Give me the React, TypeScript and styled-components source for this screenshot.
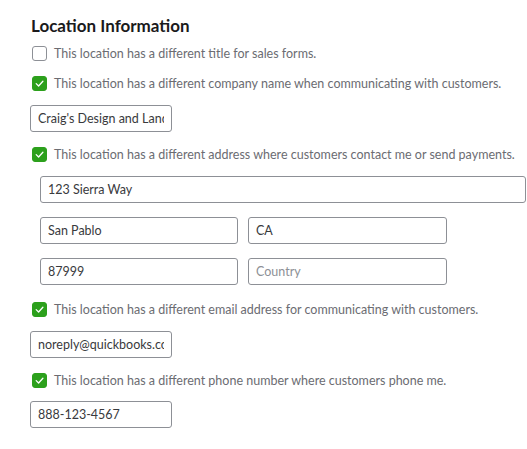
import React from "react";
import styled, { createGlobalStyle } from "styled-components";

const GlobalStyle = createGlobalStyle`
  html, body {
    margin: 0;
    padding: 0;
    background: #ffffff;
  }
  body {
    font-family: Lato, "Open Sans", Arial, sans-serif;
    -webkit-font-smoothing: antialiased;
  }
`;

const Section = styled.section`
  display: flex;
  flex-direction: column;
  align-items: flex-start;
  padding: 16px 0 0 30px;
`;

const Title = styled.h2`
  margin: 0 0 10px 1px;
  font-family: Lato, "Open Sans", Arial, sans-serif;
  font-size: 17px;
  line-height: 20px;
  font-weight: 700;
  color: #1a1a1c;
`;

const CheckRow = styled.label<{ $after?: number }>`
  display: flex;
  align-items: center;
  gap: 7px;
  height: 15px;
  margin: 0 0 ${(p) => p.$after ?? 14}px 2px;
  font-size: 12.5px;
  color: #6b6c72;
  white-space: nowrap;
  cursor: pointer;
`;

const Box = styled.span<{ $checked: boolean }>`
  box-sizing: border-box;
  display: flex;
  align-items: center;
  justify-content: center;
  width: 15px;
  height: 15px;
  flex: none;
  border-radius: 3px;
  border: 1px solid ${(p) => (p.$checked ? "#2ca01c" : "#8d9096")};
  background: ${(p) => (p.$checked ? "#2ca01c" : "#ffffff")};
`;

const Input = styled.input<{ $w: number; $after?: number }>`
  box-sizing: border-box;
  width: ${(p) => p.$w}px;
  height: 27px;
  margin: 0 0 ${(p) => p.$after ?? 15}px 0;
  padding: 0 7px;
  border: 1px solid #8d9096;
  border-radius: 3px;
  background: #ffffff;
  font-family: Lato, "Open Sans", Arial, sans-serif;
  font-size: 12.5px;
  color: #393a3d;
  outline: none;

  &::placeholder {
    color: #8d9096;
    opacity: 1;
  }
`;

const AddressGrid = styled.div`
  display: grid;
  grid-template-columns: 198px 199px;
  column-gap: 10px;
  row-gap: 14px;
  margin: 0 0 17px 10px;

  & > ${Input} {
    margin: 0;
  }
`;

const Street = styled(Input)`
  grid-column: 1 / -1;
`;

function Check({ checked }: { checked: boolean }) {
  return (
    <Box $checked={checked}>
      {checked && (
        <svg width="11" height="11" viewBox="0 0 11 11" fill="none">
          <path
            d="M2.2 5.6 L4.6 8 L8.9 3.2"
            stroke="#ffffff"
            strokeWidth="1.3"
            strokeLinecap="round"
            strokeLinejoin="round"
          />
        </svg>
      )}
    </Box>
  );
}

export default function App() {
  return (
    <>
      <GlobalStyle />
      <Section>
        <Title>Location Information</Title>

        <CheckRow $after={15}>
          <Check checked={false} />
          This location has a different title for sales forms.
        </CheckRow>

        <CheckRow>
          <Check checked />
          This location has a different company name when communicating with customers.
        </CheckRow>
        <Input $w={142} defaultValue="Craig's Design and Landscaping Services" />

        <CheckRow>
          <Check checked />
          This location has a different address where customers contact me or send payments.
        </CheckRow>
        <AddressGrid>
          <Street $w={486} defaultValue="123 Sierra Way" />
          <Input $w={198} defaultValue="San Pablo" />
          <Input $w={199} defaultValue="CA" />
          <Input $w={198} defaultValue="87999" />
          <Input $w={199} placeholder="Country" />
        </AddressGrid>

        <CheckRow>
          <Check checked />
          This location has a different email address for communicating with customers.
        </CheckRow>
        <Input $w={142} defaultValue="noreply@quickbooks.com" />

        <CheckRow $after={13}>
          <Check checked />
          This location has a different phone number where customers phone me.
        </CheckRow>
        <Input $w={142} defaultValue="888-123-4567" />
      </Section>
    </>
  );
}
